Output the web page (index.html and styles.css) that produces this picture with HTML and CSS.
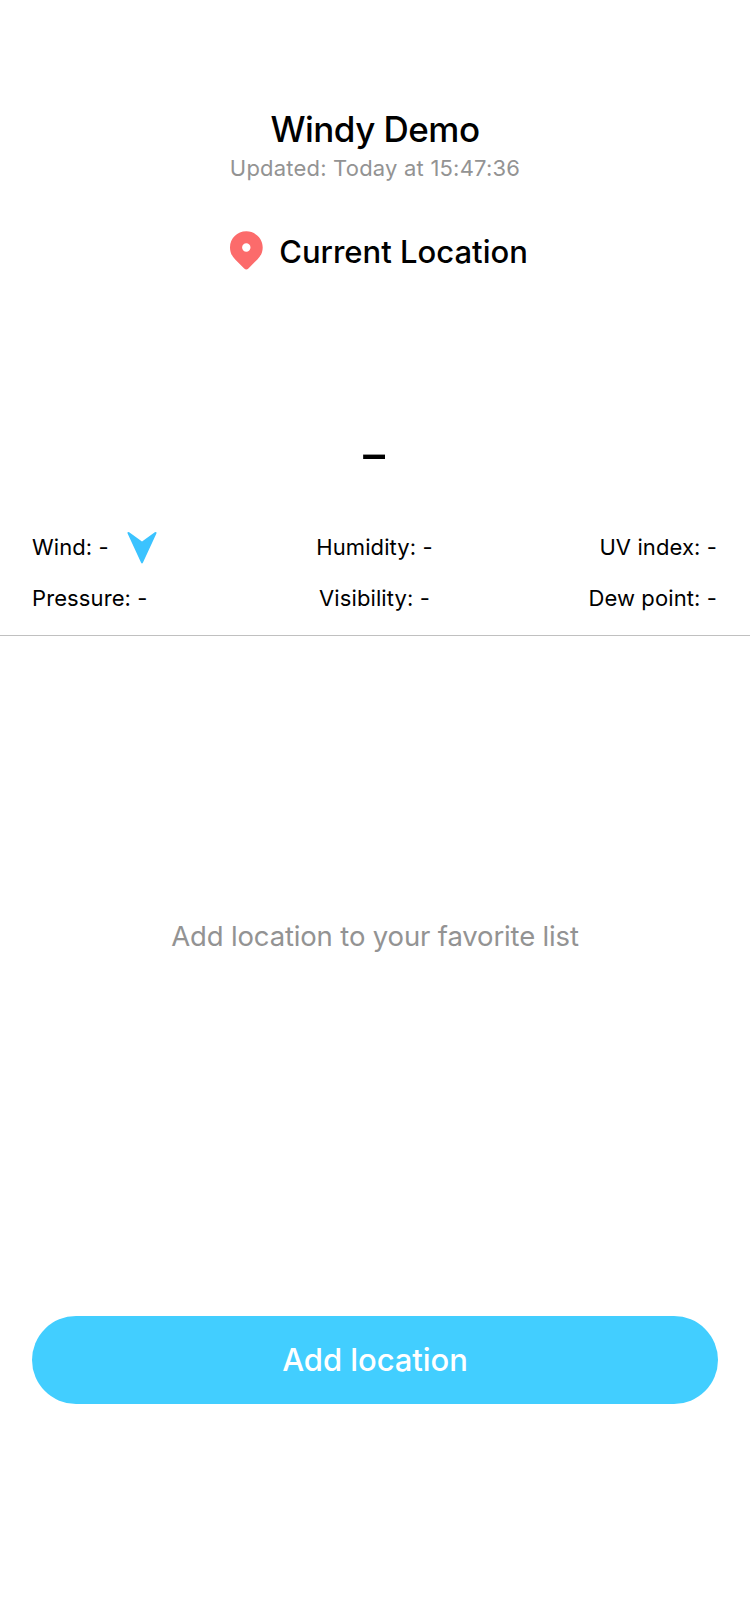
FILE: index.html
```html
<!DOCTYPE html>
<html lang="en">
<head>
<meta charset="utf-8">
<title>Windy Demo</title>
<link rel="stylesheet" href="styles.css">
</head>
<body>
<main class="screen">
  <header class="header">
    <h1 class="title">Windy Demo</h1>
    <p class="updated">Updated: Today at 15:47:36</p>
  </header>
  <section class="current">
    <div class="location">
      <svg class="pin" viewBox="0 0 33 39" aria-hidden="true">
        <path fill="#fc6b6b" fill-rule="evenodd" d="M16.3 0.3C25.4 0.3 32.7 7.5 32.7 16.4C32.7 21.2 30.8 25 27.4 28.4L18.4 37.4Q16.3 39.4 14.2 37.4L5.2 28.4C1.8 25 0 21.2 0 16.4C0 7.5 7.2 0.3 16.3 0.3ZM16.3 12.3A4.2 4.2 0 1 0 16.3 20.7A4.2 4.2 0 1 0 16.3 12.3Z"/>
      </svg>
      <h2 class="place">Current Location</h2>
    </div>
    <p class="temperature">-</p>
    <div class="stats">
      <div class="wind stat">
        <span>Wind: -</span>
        <svg class="arrow" viewBox="0 0 30 33" aria-hidden="true">
          <path fill="#3bc3ff" d="M2.2 1.2L15 10.6L27.8 1.2Q30 0.4 29.4 2.6L16 31.6Q15 33.4 14 31.6L0.6 2.6Q0 0.4 2.2 1.2Z"/>
        </svg>
      </div>
      <div class="stat stat-center">Humidity: -</div>
      <div class="stat stat-end">UV index: -</div>
      <div class="stat">Pressure: -</div>
      <div class="stat stat-center">Visibility: -</div>
      <div class="stat stat-end">Dew point: -</div>
    </div>
  </section>
  <section class="favorites">
    <p class="empty">Add location to your favorite list</p>
  </section>
  <footer class="footer">
    <button class="add" type="button">Add location</button>
  </footer>
</main>
</body>
</html>
```

FILE: styles.css
```css
* {
  box-sizing: border-box;
}

body {
  margin: 0;
  background: #fff;
  color: #000;
  font-family: Inter, "Liberation Sans", sans-serif;
}

h1, h2, p {
  margin: 0;
}

.screen {
  display: flex;
  flex-direction: column;
  height: 1624px;
}

.header {
  display: flex;
  flex-direction: column;
  gap: 4px;
  padding-top: 107px;
  text-align: center;
}

.title {
  font-size: 35px;
  font-weight: 500;
  line-height: 44px;
  letter-spacing: -0.53px;
}

.updated {
  font-size: 22px;
  line-height: 26px;
  letter-spacing: 0.2px;
  color: #939393;
}

.current {
  padding-top: 52px;
  border-bottom: 1px solid #c0c0c0;
}

.location {
  display: flex;
  justify-content: center;
  align-items: center;
  gap: 16px;
  padding-left: 8px;
  height: 38px;
}

.pin {
  width: 33px;
  height: 39px;
  margin-top: -4px;
}

.place {
  font-size: 31px;
  font-weight: 500;
  line-height: 38px;
}

.temperature {
  margin-top: 142px;
  padding-right: 2px;
  font-size: 72px;
  font-weight: 300;
  line-height: 80px;
  text-align: center;
}

.stats {
  display: grid;
  grid-template-columns: 1fr 1fr 1fr;
  row-gap: 23px;
  padding: 40px 32px 23px;
}

.stat {
  height: 28px;
  font-size: 22px;
  line-height: 28px;
  letter-spacing: 0.1px;
  white-space: nowrap;
}

.stat-center {
  padding-right: 1px;
  text-align: center;
}

.stat-end {
  padding-right: 1px;
  text-align: right;
}

.wind {
  display: flex;
  align-items: center;
  gap: 18px;
}

.arrow {
  width: 30px;
  height: 33px;
}

.favorites {
  display: flex;
  flex-direction: column;
  align-items: center;
  justify-content: center;
  height: 600px;
}

.empty {
  font-size: 27.5px;
  line-height: 34px;
  letter-spacing: -0.15px;
  color: #939393;
}

.footer {
  padding: 80px 32px 0;
}

.add {
  display: block;
  width: 100%;
  height: 88px;
  border: 0;
  padding: 0;
  border-radius: 44px;
  background: #42ceff;
  color: #fff;
  font-family: inherit;
  font-size: 31px;
  font-weight: 500;
  line-height: 38px;
  letter-spacing: -0.06px;
}
```
